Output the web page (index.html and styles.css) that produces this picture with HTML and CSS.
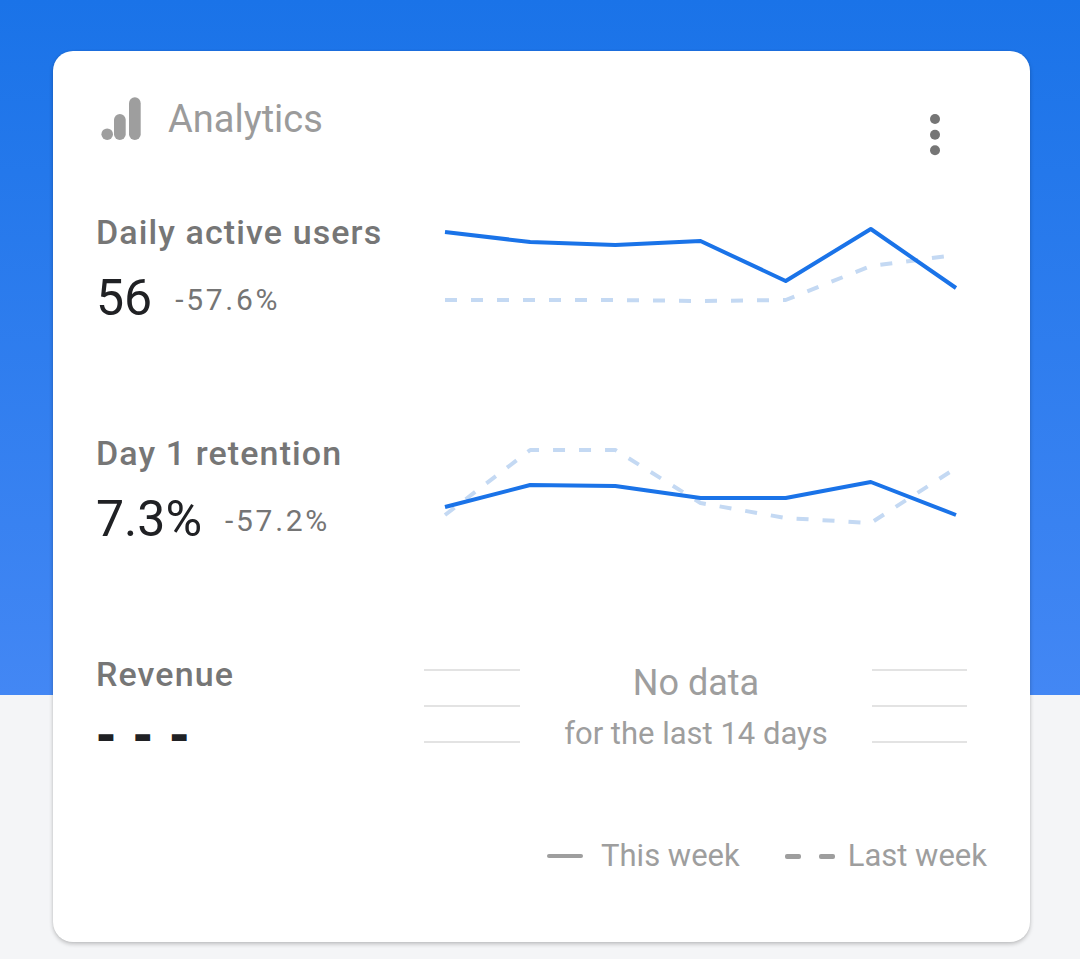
FILE: index.html
```html
<!DOCTYPE html>
<html lang="en">
<head>
<meta charset="utf-8">
<title>Analytics</title>
<link rel="stylesheet" href="styles.css">
</head>
<body>
<main class="page">
  <section class="card">
    <header class="card-header">
      <div class="title">
        <svg class="title-icon" width="44" height="44" viewBox="0 0 44 44" aria-hidden="true">
          <circle cx="9.2" cy="37.2" r="5.8"/>
          <rect x="16" y="17" width="11.7" height="26" rx="5.85"/>
          <rect x="31" y="0.3" width="11.7" height="42.7" rx="5.85"/>
        </svg>
        <h1 class="title-text">Analytics</h1>
      </div>
      <button class="more" aria-label="More options">
        <svg width="48" height="48" viewBox="0 0 48 48" aria-hidden="true">
          <circle cx="24" cy="8" r="5"/>
          <circle cx="24" cy="23.7" r="5"/>
          <circle cx="24" cy="39.3" r="5"/>
        </svg>
      </button>
    </header>

    <div class="metrics">
      <div class="metric">
        <div class="metric-info">
          <h2 class="metric-label">Daily active users</h2>
          <div class="metric-value"><span class="value">56</span><span class="change">-57.6%</span></div>
        </div>
        <svg class="chart" width="543" height="110" viewBox="0 0 543 110" aria-hidden="true">
          <polyline class="line-last" points="21,88 106.2,88 191.3,88 276.5,89 361.7,88 446.8,54 532,43"/>
          <polyline class="line-this" points="21,20 106.2,30 191.3,33 276.5,29 361.7,69 446.8,17 532,76"/>
        </svg>
      </div>

      <div class="metric">
        <div class="metric-info">
          <h2 class="metric-label">Day 1 retention</h2>
          <div class="metric-value"><span class="value">7.3%</span><span class="change">-57.2%</span></div>
        </div>
        <svg class="chart" width="543" height="110" viewBox="0 0 543 110" aria-hidden="true">
          <polyline class="line-last" points="21,82 106.2,17 191.3,17 276.5,70 361.7,85 446.8,90 532,35"/>
          <polyline class="line-this" points="21,74 106.2,52 191.3,53 276.5,65 361.7,65 446.8,49 532,82"/>
        </svg>
      </div>

      <div class="metric">
        <div class="metric-info">
          <h2 class="metric-label">Revenue</h2>
          <div class="metric-value"><span class="value-empty">- - -</span></div>
        </div>
        <div class="nodata">
          <div class="rules"><span></span><span></span><span></span></div>
          <div class="nodata-text">
            <p class="nodata-title">No data</p>
            <p class="nodata-sub">for the last 14 days</p>
          </div>
          <div class="rules"><span></span><span></span><span></span></div>
        </div>
      </div>
    </div>

    <footer class="legend">
      <div class="legend-item"><span class="swatch-solid"></span><span class="legend-text">This week</span></div>
      <div class="legend-item legend-item-last"><span class="swatch-dashed"><span></span><span></span></span><span class="legend-text">Last week</span></div>
    </footer>
  </section>
</main>
</body>
</html>
```

FILE: styles.css
```css
html, body {
  margin: 0;
  padding: 0;
}

body {
  width: 1080px;
  height: 959px;
  overflow: hidden;
  font-family: Roboto, "Noto Sans", Arial, sans-serif;
  background: linear-gradient(to bottom, #1a73e8 0, #4387f4 695px) 0 0 / 100% 695px no-repeat, #f4f5f7;
}

.page {
  padding-top: 51px;
  padding-left: 53px;
}

.card {
  box-sizing: border-box;
  width: 977px;
  height: 891px;
  padding: 40px 43px 0 43px;
  background: #ffffff;
  border-radius: 20px;
  box-shadow: 0 2px 4px rgba(0, 0, 0, 0.22), 0 0 2px rgba(0, 0, 0, 0.08);
  display: flex;
  flex-direction: column;
}

/* Header */
.card-header {
  display: flex;
  justify-content: space-between;
  align-items: flex-start;
}

.title {
  display: flex;
  align-items: center;
  height: 56px;
}

.title-icon {
  display: block;
  margin-left: 2px;
  margin-right: 26px;
  fill: #9e9e9e;
}

.title-text {
  margin: 0;
  font-size: 38px;
  font-weight: 400;
  line-height: 56px;
  color: #9b9b9b;
}

.more {
  width: 48px;
  height: 48px;
  margin: 20px 28px 0 0;
  padding: 0;
  border: 0;
  background: transparent;
}

.more svg {
  display: block;
  fill: #757575;
}

/* Metrics */
.metrics {
  margin-top: 53px;
  display: flex;
  flex-direction: column;
  gap: 107px;
}

.metric {
  display: grid;
  grid-template-columns: 328px 543px;
  height: 114px;
}

.metric-label {
  margin: 0;
  font-size: 34px;
  font-weight: 500;
  line-height: 40px;
  letter-spacing: 1.1px;
  color: #767676;
}

.metric-value {
  margin-top: 18px;
  height: 56px;
  display: flex;
  align-items: flex-start;
  gap: 23px;
}

.value {
  font-size: 50px;
  line-height: 56px;
  color: #202124;
}

.change {
  margin-top: 2px;
  font-size: 30px;
  line-height: 56px;
  letter-spacing: 2.7px;
  color: #757575;
}

.value-empty {
  font-family: "DejaVu Sans", sans-serif;
  font-weight: 700;
  font-size: 48px;
  line-height: 56px;
  color: #202124;
  margin-top: -6px;
}

/* Charts */
.chart {
  display: block;
  overflow: visible;
}

.chart polyline {
  fill: none;
  stroke-width: 4;
  stroke-linejoin: round;
}

.line-this {
  stroke: #1a73e8;
}

.line-last {
  stroke: #c4d9f3;
  stroke-dasharray: 12 14;
}

/* No data */
.nodata {
  display: grid;
  grid-template-columns: 96px 1fr 95px;
}

.rules {
  display: flex;
  flex-direction: column;
  gap: 34px;
  padding-top: 15px;
}

.rules span {
  display: block;
  height: 2px;
  background: #e3e3e3;
}

.nodata-text {
  text-align: center;
  padding-top: 9px;
  color: #9e9e9e;
}

.nodata-text p {
  margin: 0;
}

.nodata-title {
  font-size: 36px;
  line-height: 40px;
}

.nodata-sub {
  margin-top: 13px !important;
  font-size: 31px;
  line-height: 36px;
}

/* Legend */
.legend {
  margin-top: 68px;
  display: flex;
  justify-content: flex-end;
  align-items: center;
  height: 40px;
}

.legend-item {
  display: flex;
  align-items: center;
}

.legend-item-last {
  margin-left: 45px;
}

.legend-text {
  font-size: 31px;
  line-height: 40px;
  color: #9e9e9e;
}

.swatch-solid {
  width: 36px;
  height: 4px;
  border-radius: 2px;
  background: #9e9e9e;
  margin-right: 18px;
}

.swatch-dashed {
  display: flex;
  gap: 18px;
  margin-right: 13px;
}

.swatch-dashed span {
  width: 16px;
  height: 5px;
  border-radius: 2px;
  background: #9e9e9e;
}
```
